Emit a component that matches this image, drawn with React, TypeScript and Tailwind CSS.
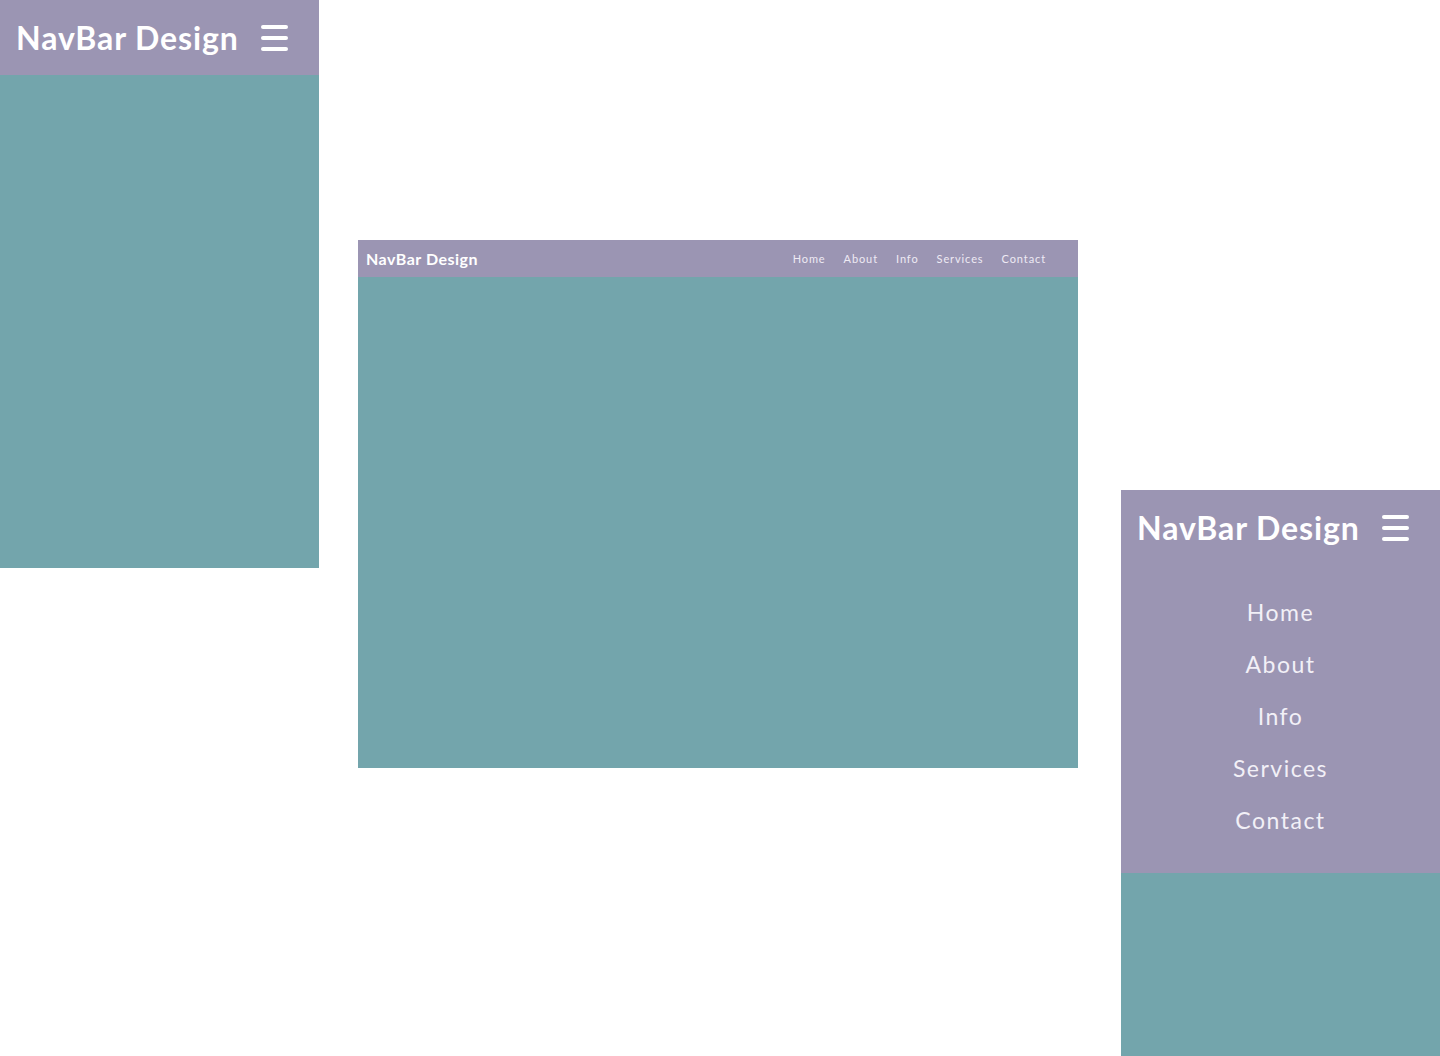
import React from "react";

const links = ["Home", "About", "Info", "Services", "Contact"];

function Burger() {
  return (
    <div className="flex w-[27px] flex-col gap-[7px]">
      <span className="block h-[4px] w-full rounded-full bg-white" />
      <span className="block h-[4px] w-full rounded-full bg-white" />
      <span className="block h-[4px] w-full rounded-full bg-white" />
    </div>
  );
}

export default function App() {
  return (
    <div className="relative h-[1056px] w-[1440px] overflow-hidden bg-white" style={{ fontFamily: "Lato, 'Open Sans', sans-serif" }}>
      {/* Left mobile */}
      <div className="absolute left-0 top-0 flex h-[568px] w-[319px] flex-col bg-[#73a5ac]">
        <div className="flex h-[75px] items-center justify-between bg-[#9b95b3] pl-[16px] pr-[31px]">
          <span className="text-[32px] font-bold tracking-[0.9px] text-white">NavBar Design</span>
          <Burger />
        </div>
      </div>

      {/* Middle desktop */}
      <div className="absolute left-[358px] top-[240px] flex h-[528px] w-[720px] flex-col bg-[#73a5ac]">
        <div className="flex h-[37px] items-center justify-between bg-[#9b95b3] pl-[8px] pr-[32px]">
          <span className="text-[16px] font-bold tracking-[0.5px] text-white">NavBar Design</span>
          <nav className="flex items-center gap-[18px] pt-[2px]">
            {links.map((l) => (
              <a key={l} className="text-[11px] tracking-[0.9px] text-[#eeeaf4]">{l}</a>
            ))}
          </nav>
        </div>
      </div>

      {/* Right mobile open */}
      <div className="absolute left-[1121px] top-[490px] flex h-[566px] w-[319px] flex-col bg-[#73a5ac]">
        <div className="flex flex-col bg-[#9b95b3]">
          <div className="flex h-[76px] items-center justify-between pl-[16px] pr-[31px]">
            <span className="text-[32px] font-bold tracking-[0.9px] text-white">NavBar Design</span>
            <Burger />
          </div>
          <nav className="flex flex-col items-center pb-[27px] pt-[20px]">
            {links.map((l) => (
              <a key={l} className="flex h-[52px] items-center text-[23px] tracking-[1.5px] text-[#f2f0f7]">{l}</a>
            ))}
          </nav>
        </div>
      </div>
    </div>
  );
}
